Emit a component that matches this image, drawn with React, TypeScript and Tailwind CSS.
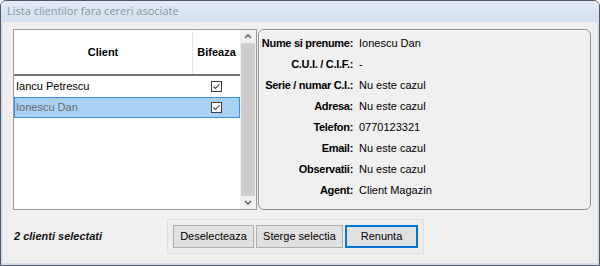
const clients = [
  { name: 'Iancu Petrescu', selected: false },
  { name: 'Ionescu Dan', selected: true },
]

const details: [string, string][] = [
  ['Nume si prenume:', 'Ionescu Dan'],
  ['C.U.I. / C.I.F.:', '-'],
  ['Serie / numar C.I.:', 'Nu este cazul'],
  ['Adresa:', 'Nu este cazul'],
  ['Telefon:', '0770123321'],
  ['Email:', 'Nu este cazul'],
  ['Observatii:', 'Nu este cazul'],
  ['Agent:', 'Client Magazin'],
]

function CheckBox() {
  return (
    <svg width="11" height="11" viewBox="0 0 11 11">
      <rect x="0.5" y="0.5" width="10" height="10" fill="#fff" stroke="#3c3c3c" />
      <path d="M2.5 5.5 L4.5 7.5 L8.5 3" fill="none" stroke="#3c3c3c" strokeWidth="1.1" />
    </svg>
  )
}

function Chevron({ up }: { up?: boolean }) {
  return (
    <svg width="8" height="5" viewBox="0 0 8 5">
      <path
        d={up ? 'M1 4 L4 1 L7 4' : 'M1 1 L4 4 L7 1'}
        fill="none"
        stroke="#606060"
        strokeWidth="1.5"
      />
    </svg>
  )
}

export default function App() {
  return (
    <div className="h-[266px] w-[600px] bg-white font-['Liberation_Sans',Arial,sans-serif] text-[11px] text-black">
      <div className="flex h-[266px] w-[600px] flex-col overflow-hidden rounded-t-[6px] border border-[#4f5763]">
        {/* title bar */}
        <div className="flex h-[21px] shrink-0 items-center bg-gradient-to-b from-[#e2ebf5] to-[#d2dfee] pl-[6px] font-['Open_Sans',sans-serif] text-[11px] text-[#8a95a2]">
          Lista clientilor fara cereri asociate
        </div>

        <div className="flex min-h-0 flex-1 flex-col border-x-2 border-b-2 border-[#d3dfed] bg-[#f0f0f0]">
          {/* top section */}
          <div className="mt-[7px] flex h-[181px] pl-[10px] pr-[6px]">
            {/* table */}
            <div className="flex w-[244px] shrink-0 border border-[#9c9c9c] bg-white">
              <div className="flex w-[226px] flex-col">
                <div className="flex h-[46px] border-b-2 border-[#747474] pt-[1px] font-bold">
                  <div className="flex w-[179px] items-center justify-center border-r border-[#e6e6e6]">
                    Client
                  </div>
                  <div className="flex flex-1 items-center justify-center">Bifeaza</div>
                </div>
                {clients.map((c) => (
                  <div
                    key={c.name}
                    className={
                      c.selected
                        ? 'flex h-[21px] items-center border border-[#3d8ddb] bg-[#a9d1f3] text-[#6b6b6b]'
                        : 'flex h-[21px] items-center border border-transparent'
                    }
                  >
                    <div className="w-[178px] pl-[1px]">{c.name}</div>
                    <div className="flex flex-1 justify-center pl-[1px]">
                      <CheckBox />
                    </div>
                  </div>
                ))}
              </div>
              {/* scrollbar */}
              <div className="flex w-[16px] flex-col bg-[#f0f0f0]">
                <div className="flex h-[13px] items-center justify-center">
                  <Chevron up />
                </div>
                <div className="mx-[1px] flex-1 bg-[#cdcdcd]" />
                <div className="flex h-[13px] items-center justify-center">
                  <Chevron />
                </div>
              </div>
            </div>

            {/* details */}
            <div className="ml-[1px] flex-1 rounded-[6px] border border-[#8f8f8f] pt-[3px] shadow-[inset_1px_1px_0_#ffffff]">
              {details.map(([label, value]) => (
                <div key={label} className="flex h-[21px] items-center">
                  <div className="flex w-[94px] shrink-0 justify-end">
                    <span className="whitespace-nowrap font-bold tracking-[-0.3px]">{label}</span>
                  </div>
                  <div className="whitespace-nowrap pl-[6px]">{value}</div>
                </div>
              ))}
            </div>
          </div>

          {/* bottom section */}
          <div className="flex flex-1 items-center">
            <div className="w-[164px] pl-[11px] font-bold italic text-[#111]">2 clienti selectati</div>
            <div className="flex h-[35px] items-center gap-[2px] border border-[#e0e0e0] bg-[#ededed] px-[5px]">
              <button className="h-[23px] w-[81px] border border-[#adadad] bg-[#e1e1e1]">Deselecteaza</button>
              <button className="h-[23px] w-[87px] border border-[#adadad] bg-[#e1e1e1]">Sterge selectia</button>
              <button className="h-[23px] w-[73px] border-2 border-[#0078d7] bg-[#e1e1e1]">Renunta</button>
            </div>
          </div>
        </div>
      </div>
    </div>
  )
}
